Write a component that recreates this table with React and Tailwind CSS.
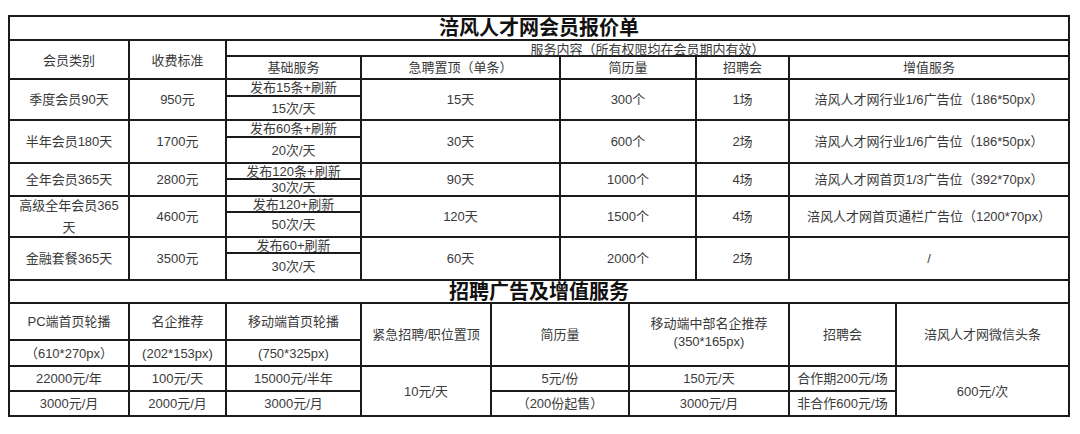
const FONT = { fontFamily: '"Liberation Sans", "Noto Sans CJK SC", sans-serif' };

const MEMBERS = [
  { name: '季度会员90天', price: '950元', post: '发布15条+刷新', refresh: '15次/天', top: '15天', cv: '300个', fair: '1场', extra: '涪风人才网行业1/6广告位（186*50px）' },
  { name: '半年会员180天', price: '1700元', post: '发布60条+刷新', refresh: '20次/天', top: '30天', cv: '600个', fair: '2场', extra: '涪风人才网行业1/6广告位（186*50px）' },
  { name: '全年会员365天', price: '2800元', post: '发布120条+刷新', refresh: '30次/天', top: '90天', cv: '1000个', fair: '4场', extra: '涪风人才网首页1/3广告位（392*70px）' },
  { name: <>高级全年会员365<br />天</>, price: '4600元', post: '发布120+刷新', refresh: '50次/天', top: '120天', cv: '1500个', fair: '4场', extra: '涪风人才网首页通栏广告位（1200*70px）' },
  { name: '金融套餐365天', price: '3500元', post: '发布60+刷新', refresh: '30次/天', top: '60天', cv: '2000个', fair: '2场', extra: '/' },
];

function Cell({ className = '', leading = 'leading-none', children }) {
  return (
    <div className={`bg-white flex items-center justify-center text-center whitespace-nowrap ${leading} ${className}`}>
      {children}
    </div>
  );
}

export default function App() {
  return (
    <div className="w-[1080px] h-[434px] bg-white pt-[15px] pl-[8px] text-[13px] text-[#3a3a3a]" style={FONT}>
      {/* 会员报价 */}
      <div className="grid w-fit bg-[#1a1a1a] gap-[2px] px-[2px] pt-[2px] grid-cols-[118px_95px_133px_197px_134px_91px_278px] grid-rows-[22px_14px_21px_15px_22px_15px_24px_14px_15px_14px_23px_14px_25px]">
        <Cell className="col-span-7 text-[20px] font-bold text-[#111]">涪风人才网会员报价单</Cell>
        <Cell className="row-span-2 pt-[2px]">会员类别</Cell>
        <Cell className="row-span-2 pt-[2px]">收费标准</Cell>
        <Cell className="col-span-5 pt-[2px]">服务内容（所有权限均在会员期内有效）</Cell>
        <Cell>基础服务</Cell>
        <Cell>急聘置顶（单条）</Cell>
        <Cell>简历量</Cell>
        <Cell>招聘会</Cell>
        <Cell>增值服务</Cell>
        {MEMBERS.map((m, i) => (
          <div key={i} className="contents">
            <Cell className="row-span-2" leading="leading-[22px]">{m.name}</Cell>
            <Cell className="row-span-2">{m.price}</Cell>
            <Cell>{m.post}</Cell>
            <Cell className="row-span-2">{m.top}</Cell>
            <Cell className="row-span-2">{m.cv}</Cell>
            <Cell className="row-span-2">{m.fair}</Cell>
            <Cell className="row-span-2">{m.extra}</Cell>
            <Cell>{m.refresh}</Cell>
          </div>
        ))}
      </div>

      {/* 招聘广告及增值服务 */}
      <div className="grid w-fit bg-[#1a1a1a] gap-[2px] p-[2px] grid-cols-[118px_95px_133px_128px_136px_158px_105px_171px] grid-rows-[21px_35px_24px_23px_23px]">
        <Cell className="col-span-8 text-[20px] font-bold text-[#111]">招聘广告及增值服务</Cell>
        <Cell>PC端首页轮播</Cell>
        <Cell>名企推荐</Cell>
        <Cell>移动端首页轮播</Cell>
        <Cell className="row-span-2">紧急招聘/职位置顶</Cell>
        <Cell className="row-span-2">简历量</Cell>
        <Cell className="row-span-2 flex-col pb-[4px]" leading="leading-[18px]">
          <span>移动端中部名企推荐</span>
          <span>(350*165px)</span>
        </Cell>
        <Cell className="row-span-2">招聘会</Cell>
        <Cell className="row-span-2">涪风人才网微信头条</Cell>
        <Cell>（610*270px）</Cell>
        <Cell>(202*153px)</Cell>
        <Cell>(750*325px)</Cell>
        <Cell>22000元/年</Cell>
        <Cell>100元/天</Cell>
        <Cell>15000元/半年</Cell>
        <Cell className="row-span-2">10元/天</Cell>
        <Cell>5元/份</Cell>
        <Cell>150元/天</Cell>
        <Cell>合作期200元/场</Cell>
        <Cell className="row-span-2">600元/次</Cell>
        <Cell>3000元/月</Cell>
        <Cell>2000元/月</Cell>
        <Cell>3000元/月</Cell>
        <Cell>（200份起售）</Cell>
        <Cell>3000元/月</Cell>
        <Cell>非合作600元/场</Cell>
      </div>
    </div>
  );
}
